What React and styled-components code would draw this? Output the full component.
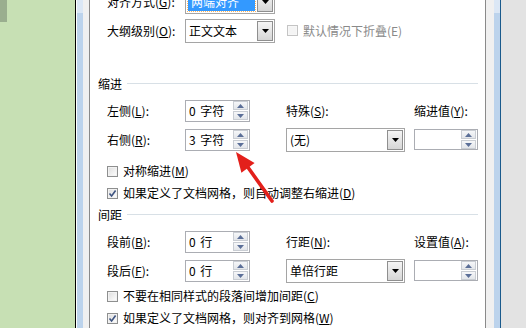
import React from 'react';
import styled, { createGlobalStyle } from 'styled-components';

const GlobalStyle = createGlobalStyle`
  html, body {
    margin: 0;
    padding: 0;
    background: #ffffff;
  }
  body {
    font-family: "Noto Sans CJK SC", "Noto Sans", sans-serif;
    font-size: 12px;
  }
`;

const Page = styled.div`
  display: flex;
  width: 526px;
  height: 328px;
  overflow: hidden;
`;

const GreenPane = styled.div`
  flex: none;
  width: 75px;
  background: #c7e0b4;
`;

const PaneTab = styled.div`
  width: 7px;
  height: 22px;
  background: #9aae8f;
`;

const FrameLine = styled.div`
  flex: none;
  width: 1px;
  background: ${(p) => p.$color};
`;

const FrameStrip = styled.div`
  flex: none;
  width: ${(p) => p.$w}px;
  background: ${(p) => p.$bg};
`;

const BlueStrip = styled.div`
  flex: none;
  width: 6px;
  background: linear-gradient(#dbe7f5 0, #dbe7f5 13px, #bcd3ec 13px);
`;

const RightGrey = styled.div`
  flex: 1;
  background: #e3e3e3;
`;

const Dialog = styled.div`
  position: relative;
  flex: none;
  width: 395px;
  background: #ffffff;
  overflow: hidden;
  color: #000;
`;

const Body = styled.div`
  display: flex;
  flex-direction: column;
  margin-top: -13px;
  padding: 0 7px 0 8px;
`;

const SectionTitle = styled.div`
  display: flex;
  align-items: center;
  gap: 5px;
  height: 16px;
  margin-top: ${(p) => p.$mt}px;
  line-height: 16px;

  &::after {
    content: '';
    flex: 1;
    height: 1px;
    margin-top: -2px;
    background: #d8e0e6;
  }
`;

const Grid = styled.div`
  display: grid;
  grid-template-columns: ${(p) => p.$cols || '78px 101px 128px 64px'};
  grid-auto-rows: 29px;
  align-items: center;
  padding-left: 9px;
  margin-top: ${(p) => p.$mt || 0}px;
`;

const Label = styled.span`
  white-space: nowrap;
  line-height: 16px;
  color: ${(p) => (p.$disabled ? '#8a8a8a' : '#000')};
`;

const CheckRow = styled.div`
  display: flex;
  align-items: center;
  gap: 5px;
  height: 22px;
  padding-left: ${(p) => (p.$inline ? 1 : 9)}px;
  margin-top: ${(p) => p.$mt || 0}px;
`;

const Box = styled.span`
  box-sizing: border-box;
  display: flex;
  align-items: center;
  justify-content: center;
  width: 11px;
  height: 11px;
  border: 1px solid ${(p) => (p.$disabled ? '#c4c4c4' : '#8e8f8f')};
  background: ${(p) =>
    p.$disabled ? '#f4f4f4' : 'linear-gradient(135deg, #dcdcdc, #ffffff)'};
  box-shadow: inset 0 0 0 1px ${(p) => (p.$disabled ? '#f7f7f7' : '#f2f2f2')};
`;

const SpinBox = styled.div`
  box-sizing: border-box;
  display: flex;
  align-items: center;
  width: ${(p) => p.$w}px;
  height: ${(p) => p.$h}px;
  border: 1px solid #abadb3;
  background: #fff;
`;

const SpinText = styled.span`
  flex: 1;
  padding-left: 3px;
  white-space: nowrap;
  word-spacing: 2px;
`;

const SpinButtons = styled.div`
  display: flex;
  flex-direction: column;
  gap: 1px;
  margin-right: 1px;
`;

const SpinButton = styled.div`
  box-sizing: border-box;
  display: flex;
  align-items: center;
  justify-content: center;
  width: 15px;
  height: 9px;
  border: 1px solid #c9cdd3;
  background: linear-gradient(#f6f7f9, #e3e6ea);
`;

const Select = styled.div`
  box-sizing: border-box;
  display: flex;
  align-items: stretch;
  width: ${(p) => p.$w}px;
  height: 24px;
  border: 1px solid #a5a5a5;
  background: #fff;
`;

const SelectText = styled.span`
  flex: 1;
  display: flex;
  align-items: center;
  padding-left: 3px;
  white-space: nowrap;
`;

const Highlight = styled.span`
  flex: 1;
  display: flex;
  align-items: center;
  margin: 2px 1px 2px 2px;
  padding-left: 3px;
  background: #3399ff;
  color: #fff;
  outline: 1px dotted #ffb45c;
  white-space: nowrap;
`;

const SelectButton = styled.div`
  box-sizing: border-box;
  display: flex;
  align-items: center;
  justify-content: center;
  width: 16px;
  margin: 1px;
  border: 1px solid #8f8f8f;
  background: linear-gradient(#f5f5f5, #d6d6d6);
`;

const ArrowOverlay = styled.svg`
  position: absolute;
  left: 136px;
  top: 145px;
  width: 60px;
  height: 65px;
  pointer-events: none;
`;

const Tri = ({ up }) => (
  <svg width="7" height="4" viewBox="0 0 7 4">
    <path d={up ? 'M3.5 0 L7 4 L0 4 Z' : 'M0 0 L7 0 L3.5 4 Z'} fill="#5b6f98" />
  </svg>
);

const Spinner = ({ value, w = 65, h = 22 }) => (
  <SpinBox $w={w} $h={h}>
    <SpinText>{value}</SpinText>
    <SpinButtons>
      <SpinButton>
        <Tri up />
      </SpinButton>
      <SpinButton>
        <Tri />
      </SpinButton>
    </SpinButtons>
  </SpinBox>
);

const Dropdown = ({ value, w, selected }) => (
  <Select $w={w}>
    {selected ? <Highlight>{value}</Highlight> : <SelectText>{value}</SelectText>}
    <SelectButton>
      <svg width="7" height="4" viewBox="0 0 7 4">
        <path d="M0 0 L7 0 L3.5 4 Z" fill="#000" />
      </svg>
    </SelectButton>
  </Select>
);

const CheckBox = ({ checked, disabled }) => (
  <Box $disabled={disabled}>
    {checked && (
      <svg width="9" height="9" viewBox="0 0 9 9">
        <path d="M1.5 4.5 L3.6 7 L7.6 1.5" fill="none" stroke="#3d5380" strokeWidth="1.6" />
      </svg>
    )}
  </Box>
);

const Key = ({ children }) => <u>{children}</u>;

export default function App() {
  return (
    <Page>
      <GlobalStyle />
      <GreenPane>
        <PaneTab />
      </GreenPane>
      <FrameLine $color="#000" />
      <FrameLine $color="#fff" />
      <BlueStrip />
      <FrameStrip $w={6} $bg="#f0f0f0" />
      <FrameLine $color="#8a8a8a" />

      <Dialog>
        <Body>
          <Grid $cols="78px 101px 1fr">
            <Label>对齐方式(<Key>G</Key>):</Label>
            <Dropdown value="两端对齐" w={90} selected />
            <span />
            <Label>大纲级别(<Key>O</Key>):</Label>
            <Dropdown value="正文文本" w={90} />
            <CheckRow $inline>
              <CheckBox disabled />
              <Label $disabled>默认情况下折叠(E)</Label>
            </CheckRow>
          </Grid>

          <SectionTitle $mt={31}>缩进</SectionTitle>
          <Grid $mt={4}>
            <Label>左侧(<Key>L</Key>):</Label>
            <Spinner value="0 字符" />
            <Label>特殊(<Key>S</Key>):</Label>
            <Label>缩进值(<Key>Y</Key>):</Label>
            <Label>右侧(<Key>R</Key>):</Label>
            <Spinner value="3 字符" />
            <Dropdown value="(无)" w={119} />
            <Spinner value="" w={64} h={21} />
          </Grid>
          <CheckRow $mt={6}>
            <CheckBox />
            <Label>对称缩进(<Key>M</Key>)</Label>
          </CheckRow>
          <CheckRow>
            <CheckBox checked />
            <Label>如果定义了文档网格，则自动调整右缩进(<Key>D</Key>)</Label>
          </CheckRow>

          <SectionTitle $mt={3}>间距</SectionTitle>
          <Grid $mt={4}>
            <Label>段前(<Key>B</Key>):</Label>
            <Spinner value="0 行" />
            <Label>行距(<Key>N</Key>):</Label>
            <Label>设置值(<Key>A</Key>):</Label>
            <Label>段后(<Key>F</Key>):</Label>
            <Spinner value="0 行" />
            <Dropdown value="单倍行距" w={119} />
            <Spinner value="" w={64} h={21} />
          </Grid>
          <CheckRow>
            <CheckBox />
            <Label>不要在相同样式的段落间增加间距(<Key>C</Key>)</Label>
          </CheckRow>
          <CheckRow>
            <CheckBox checked />
            <Label>如果定义了文档网格，则对齐到网格(<Key>W</Key>)</Label>
          </CheckRow>
        </Body>

        <ArrowOverlay viewBox="0 0 60 65">
          <line x1="21" y1="21" x2="46" y2="56" stroke="#e3201b" strokeWidth="3.6" strokeLinecap="round" />
          <path d="M10 7 L28.6 18 L15.4 27.8 Z" fill="#e3201b" />
        </ArrowOverlay>
      </Dialog>

      <FrameLine $color="#8a8a8a" />
      <FrameStrip $w={8} $bg="#f0f0f0" />
      <BlueStrip />
      <FrameLine $color="#1a5a8c" />
      <RightGrey />
    </Page>
  );
}
